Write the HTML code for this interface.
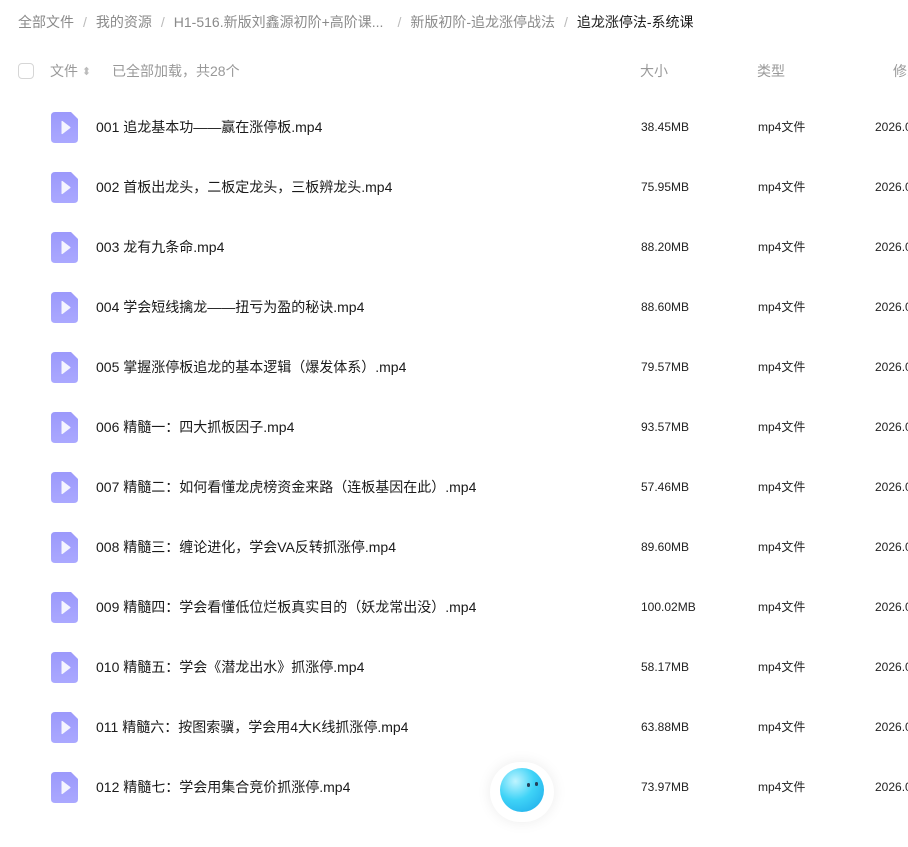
<!DOCTYPE html>
<html><head><meta charset="utf-8"><style>
*{margin:0;padding:0;box-sizing:border-box}
body{width:908px;height:809px;overflow:hidden;background:#fff;font-family:"Liberation Sans","Noto Sans CJK SC",sans-serif;position:relative;color:#222}
.abs{position:absolute;white-space:nowrap}
.bc{top:13px;left:18px;font-size:14px;color:#8a8a8a;line-height:18px}
.bc span.s{margin:0 9px;color:#bbb}
.bc b{font-weight:normal;color:#1a1a1a}
.hd{top:62px;font-size:14px;color:#999;line-height:18px}
.cb{position:absolute;left:18px;top:63px;width:16px;height:16px;border:1px solid #d6d6d6;border-radius:4px}
.row{position:absolute;left:0;width:908px;height:60px}
.ic{position:absolute;left:51px;top:-15px}
.nm{position:absolute;left:96px;top:-9px;font-size:14px;color:#1a1a1a;line-height:18px;white-space:nowrap}
.sz{position:absolute;left:641px;top:-8px;font-size:12px;color:#222;line-height:16px}
.ty{position:absolute;left:758px;top:-8px;font-size:12px;color:#222;line-height:16px}
.dt{position:absolute;left:875px;top:-8px;font-size:12px;color:#222;line-height:16px;white-space:nowrap}
</style></head><body>
<div class="abs bc">全部文件<span class="s">/</span>我的资源<span class="s">/</span>H1-516.新版刘鑫源初阶+高阶课...<span class="s" style="margin:0 9px 0 14px">/</span>新版初阶-追龙涨停战法<span class="s">/</span><b>追龙涨停法-系统课</b></div>
<div class="cb"></div>
<div class="abs hd" style="left:50px">文件 <span style="font-size:11px;color:#bbb;position:relative;top:-1px">⬍</span></div>
<div class="abs hd" style="left:112px">已全部加载，共28个</div>
<div class="abs hd" style="left:640px">大小</div>
<div class="abs hd" style="left:757px">类型</div>
<div class="abs hd" style="left:893px">修改</div>

<div id="rows"></div>
<script>
var d=[["001 追龙基本功——赢在涨停板.mp4","38.45MB"],["002 首板出龙头，二板定龙头，三板辨龙头.mp4","75.95MB"],["003 龙有九条命.mp4","88.20MB"],["004 学会短线擒龙——扭亏为盈的秘诀.mp4","88.60MB"],["005 掌握涨停板追龙的基本逻辑（爆发体系）.mp4","79.57MB"],["006 精髓一：四大抓板因子.mp4","93.57MB"],["007 精髓二：如何看懂龙虎榜资金来路（连板基因在此）.mp4","57.46MB"],["008 精髓三：缠论进化，学会VA反转抓涨停.mp4","89.60MB"],["009 精髓四：学会看懂低位烂板真实目的（妖龙常出没）.mp4","100.02MB"],["010 精髓五：学会《潜龙出水》抓涨停.mp4","58.17MB"],["011 精髓六：按图索骥，学会用4大K线抓涨停.mp4","63.88MB"],["012 精髓七：学会用集合竞价抓涨停.mp4","73.97MB"]];
var h='';
d.forEach(function(r,i){var y=127+i*60;
h+='<div class="row" style="top:'+y+'px"><svg class="ic" width="27" height="31" viewBox="0 0 27 31"><defs><linearGradient id="g'+i+'" x1="0" y1="0" x2="0" y2="1"><stop offset="0" stop-color="#9c99fb"/><stop offset="1" stop-color="#aaa8ff"/></linearGradient></defs><path d="M4 0H20L27 7V27Q27 31 23 31H4Q0 31 0 27V4Q0 0 4 0Z" fill="url(#g'+i+')"/><path d="M10.5 9.5Q10.5 8.5 11.5 9L19 14.7Q20 15.5 19 16.3L11.5 22Q10.5 22.5 10.5 21.5Z" fill="#f4f4ff"/></svg><div class="nm">'+r[0]+'</div><div class="sz">'+r[1]+'</div><div class="ty">mp4文件</div><div class="dt">2026.0</div></div>';});
document.getElementById('rows').innerHTML=h;
</script>
<div style="position:absolute;left:490px;top:762px;width:64px;height:60px;border-radius:30px;background:#fff;box-shadow:0 0 14px rgba(0,0,0,0.08)"></div>
<div style="position:absolute;left:500px;top:768px;width:44px;height:44px;border-radius:50%;background:radial-gradient(circle at 35% 30%,#bff4ff,#3fd3f7 45%,#1aa6e8)"></div>
<div style="position:absolute;left:527px;top:783px;width:3px;height:4px;border-radius:2px;background:#24405a"></div>
<div style="position:absolute;left:535px;top:782px;width:3px;height:4px;border-radius:2px;background:#24405a"></div>
</body></html>
